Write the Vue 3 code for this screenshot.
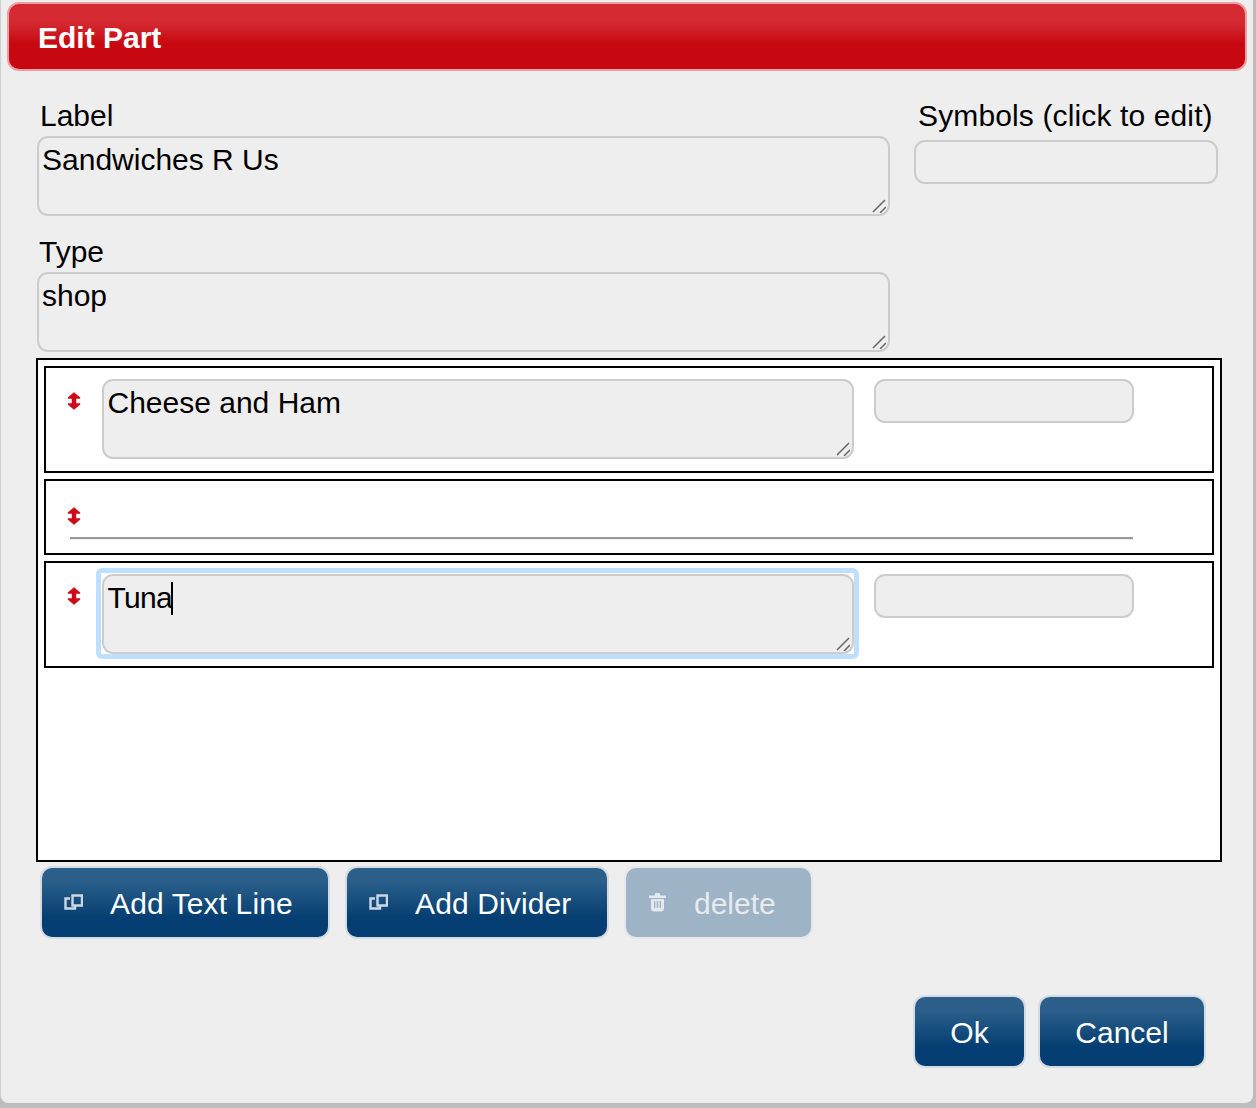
<script setup>
import { ref } from 'vue';

const rows = ref([
  { id: 1, kind: 'text', text: 'Cheese and Ham', focused: false },
  { id: 2, kind: 'divider' },
  { id: 3, kind: 'text', text: 'Tuna', focused: true },
]);
</script>

<template>
  <div class="dialog">
    <header class="title">Edit Part</header>

    <div class="form">
      <div class="main-col">
        <div class="lbl">Label</div>
        <div class="area">
          Sandwiches R Us
          <svg class="resize" viewBox="0 0 14 14"><path d="M1 13 13 1M8 14l6-6" /></svg>
        </div>
        <div class="lbl type-lbl">Type</div>
        <div class="area">
          shop
          <svg class="resize" viewBox="0 0 14 14"><path d="M1 13 13 1M8 14l6-6" /></svg>
        </div>
      </div>
      <div class="side-col">
        <div class="lbl side-lbl">Symbols (click to edit)</div>
        <div class="symbols"></div>
      </div>
    </div>

    <div class="parts">
      <div v-for="row in rows" :key="row.id" class="part" :class="row.kind">
        <svg class="handle" viewBox="0 0 14 18">
          <path d="M7 .5 13 5.500V6.500H9V11.500H13V12.500L7 17.500 1 12.500V11.500H5V6.500H1V5.500Z" />
        </svg>
        <template v-if="row.kind === 'text'">
          <div class="area line-area" :class="{ focused: row.focused }">
            {{ row.text }}<span v-if="row.focused" class="caret"></span>
            <svg class="resize" viewBox="0 0 14 14"><path d="M1 13 13 1M8 14l6-6" /></svg>
          </div>
          <div class="symbols line-symbols"></div>
        </template>
        <div v-else class="rule"></div>
      </div>
    </div>

    <div class="tools">
      <button class="btn add-line">
        <svg class="ico" viewBox="0 0 19 16"><path d="M8.500 1.500H18V11.500H8.500ZM6 4.500H1.500V14.500H11V12.500" /></svg>
        Add Text Line
      </button>
      <button class="btn add-divider">
        <svg class="ico" viewBox="0 0 19 16"><path d="M8.500 1.500H18V11.500H8.500ZM6 4.500H1.500V14.500H11V12.500" /></svg>
        Add Divider
      </button>
      <button class="btn delete" disabled>
        <svg class="ico trash" viewBox="0 0 19 20">
          <path d="M1 3.500H6.500L7.500 1H11.500L12.500 3.500H18V6H1ZM3 7H16V16Q16 19.500 13 19.500H6Q3 19.500 3 16ZM6 9V16H7.300V9ZM8.800 9V16H10.200V9ZM11.700 9V16H13V9Z" fill-rule="evenodd" />
        </svg>
        delete
      </button>
    </div>

    <div class="footer">
      <button class="btn plain ok">Ok</button>
      <button class="btn plain cancel">Cancel</button>
    </div>
  </div>
</template>

<style>
html {
  background: #bdbdbd;
}
body {
  margin: 0;
}
</style>

<style scoped>
.dialog {
  box-sizing: border-box;
  width: 1253px;
  height: 1103px;
  background: #eeeeee;
  border-left: 1px solid #cfcfcf;
  border-radius: 0 0 8px 8px;
  overflow: hidden;
  padding-top: 2px;
  font-family: "Liberation Sans", Arial, sans-serif;
  font-size: 30px;
  color: #000;
}
.title {
  box-sizing: border-box;
  height: 69px;
  margin: 0 6px 0 6px;
  padding: 1px 0 0 29px;
  line-height: 66px;
  font-weight: bold;
  color: #fff;
  background: linear-gradient(#d52a32 0, #d52a32 28%, #c70811 62%, #c70811 100%);
  border: 2px solid #ea9fa4;
  border-radius: 12px;
}
.form {
  display: flex;
  gap: 24px;
  padding: 29px 0 0 36px;
}
.main-col {
  width: 853px;
}
.side-col {
  width: 304px;
}
.lbl {
  padding: 0 0 4px 3px;
  line-height: 32px;
}
.side-lbl {
  padding-left: 4px;
  letter-spacing: 0.13px;
  white-space: nowrap;
}
.type-lbl {
  margin-top: 20px;
  padding-left: 2px;
}
.area {
  position: relative;
  box-sizing: border-box;
  height: 80px;
  padding: 5px 3px;
  line-height: 34px;
  background: #eeeeee;
  border: 2px solid #cccccc;
  border-radius: 11px;
}
.resize {
  position: absolute;
  right: 2px;
  bottom: 1px;
  width: 14px;
  height: 14px;
}
.resize path {
  fill: none;
  stroke: #666;
  stroke-width: 1.5;
}
.symbols {
  box-sizing: border-box;
  height: 44px;
  margin-top: 4px;
  background: #eeeeee;
  border: 2px solid #cccccc;
  border-radius: 11px;
}
.parts {
  box-sizing: border-box;
  width: 1186px;
  height: 504px;
  margin: 6px 0 0 35px;
  padding: 6px;
  display: flex;
  flex-direction: column;
  gap: 6px;
  background: #fff;
  border: 2px solid #000;
}
.part {
  box-sizing: border-box;
  width: 1170px;
  border: 2px solid #000;
}
.part.text {
  display: flex;
  align-items: flex-start;
  padding: 11px 0 12px 21px;
}
.part.divider {
  padding: 26px 0 13px 24px;
}
.handle {
  display: block;
  width: 14px;
  height: 18px;
  flex: none;
}
.handle path {
  fill: #cc0a18;
  stroke: #cc0a18;
  stroke-width: 0.5;
  stroke-linejoin: round;
}
.part.text .handle {
  margin: 13px 21px 0 0;
}
.part.divider .handle {
  margin-left: -3px;
}
.line-area {
  width: 752px;
  flex: none;
  padding-left: 3.5px;
}
.focused {
  letter-spacing: -0.7px;
}
.focused::after {
  content: "";
  position: absolute;
  top: -8px;
  left: -8px;
  right: -7px;
  bottom: -7px;
  border: 5px solid #bfdfff;
  border-radius: 6px;
  pointer-events: none;
}
.caret {
  display: inline-block;
  width: 2px;
  height: 33px;
  margin-left: -1px;
  vertical-align: -7px;
  background: #000;
}
.line-symbols {
  width: 260px;
  margin: 0 0 0 20px;
  flex: none;
}
.rule {
  width: 1063px;
  margin-top: 12px;
  border-top: 2px solid #999;
  border-bottom: 1px solid #eee;
}
.tools {
  display: flex;
  gap: 19px;
  margin: 6px 0 0 41px;
}
.btn {
  box-sizing: border-box;
  display: flex;
  align-items: center;
  height: 69px;
  padding: 2px 0 0 23px;
  border: 0;
  border-radius: 10px;
  box-shadow: 0 0 0 2px #d4dce3;
  background: linear-gradient(#2b5f8a 0, #2b5f8a 20%, #053e72 72%, #053e72 100%);
  color: #fff;
  font: inherit;
  line-height: 34px;
}
.add-line,
.add-divider {
  letter-spacing: 0.12px;
}
.add-line {
  width: 286px;
}
.add-divider {
  width: 260px;
}
.delete {
  width: 185px;
}
.ok {
  width: 109px;
}
.cancel {
  width: 164px;
}
.btn.plain {
  justify-content: center;
  padding: 2px 0 0;
}
.ico {
  width: 19px;
  height: 16px;
  margin: -4px 27px 0 -1px;
  flex: none;
}
.ico path {
  fill: none;
  stroke: #ccd9e4;
  stroke-width: 2.4;
}
.ico.trash {
  height: 20px;
  margin: -3px 27px 0 -1px;
}
.ico.trash path {
  fill: #e4e9ed;
  stroke: none;
}
.btn.delete {
  background: #9eb3c5;
  color: #e7ebee;
  box-shadow: 0 0 0 2px #e4e8eb;
}
.footer {
  display: flex;
  justify-content: flex-end;
  gap: 16px;
  margin-top: 60px;
  padding-right: 49px;
}
</style>
